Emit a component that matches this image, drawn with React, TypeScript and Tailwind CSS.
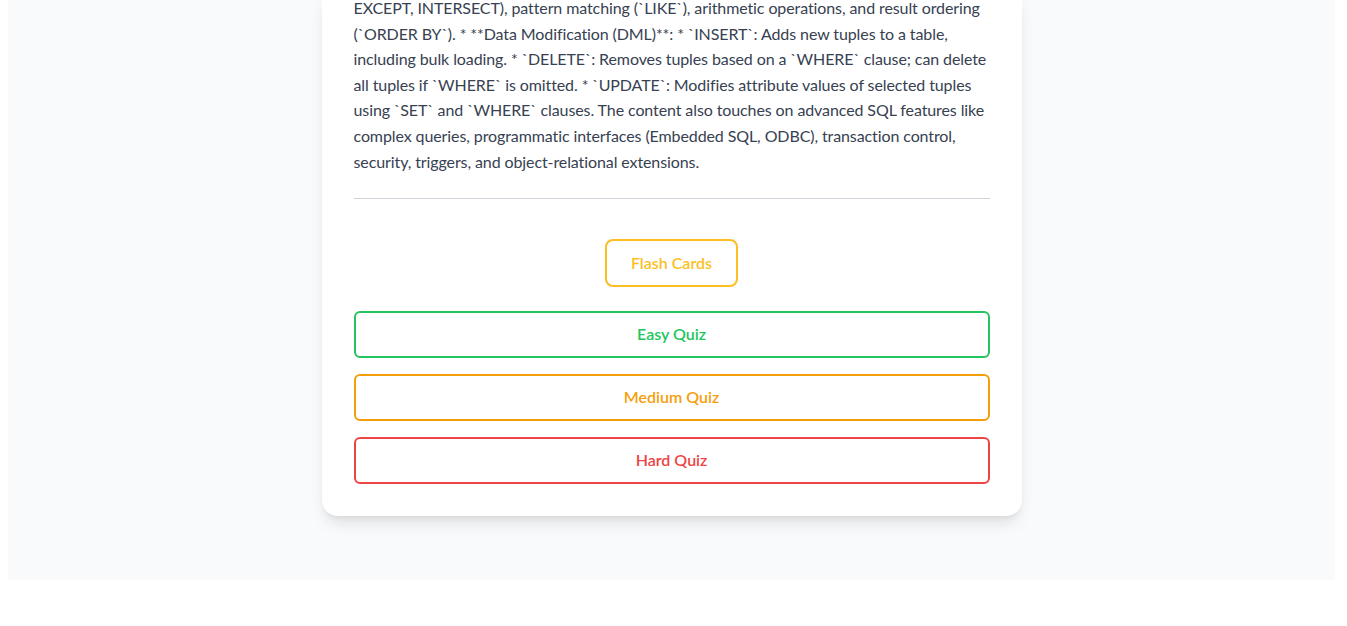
export default function App() {
  return (
    <div className="ml-2 w-[1327px] bg-gray-50 pb-16" style={{ fontFamily: "Lato, 'Noto Sans', sans-serif" }}>
      <div className="mx-auto w-[700px] rounded-b-2xl bg-white px-8 pb-8 shadow-lg">
        {/* Summary text */}
        <p className="-mt-[5px] text-base leading-[1.6] tracking-[-0.1px] text-[#374151]">
          EXCEPT, INTERSECT), pattern matching (`LIKE`), arithmetic operations, and result ordering
          (`ORDER BY`). * **Data Modification (DML)**: * `INSERT`: Adds new tuples to a table,
          including bulk loading. * `DELETE`: Removes tuples based on a `WHERE` clause; can delete
          all tuples if `WHERE` is omitted. * `UPDATE`: Modifies attribute values of selected tuples
          using `SET` and `WHERE` clauses. The content also touches on advanced SQL features like
          complex queries, programmatic interfaces (Embedded SQL, ODBC), transaction control,
          security, triggers, and object-relational extensions.
        </p>

        <hr className="mt-6 border-[#d1d5db]" />

        {/* Actions */}
        <div className="mt-10 flex justify-center">
          <button className="rounded-lg border-2 border-[#fbbf24] px-6 py-2.5 text-base leading-6 font-semibold text-[#fbbf24]">
            Flash Cards
          </button>
        </div>
        <div className="mt-6 flex flex-col gap-4">
          <button className="w-full rounded-md border-2 border-[#22c55e] pt-[9px] pb-[10px] text-base leading-6 font-semibold text-[#22c55e]">
            Easy Quiz
          </button>
          <button className="w-full rounded-md border-2 border-[#f59e0b] pt-[9px] pb-[10px] text-base leading-6 font-semibold text-[#f59e0b]">
            Medium Quiz
          </button>
          <button className="w-full rounded-md border-2 border-[#ef4444] pt-[9px] pb-[10px] text-base leading-6 font-semibold text-[#ef4444]">
            Hard Quiz
          </button>
        </div>
      </div>
    </div>
  );
}
